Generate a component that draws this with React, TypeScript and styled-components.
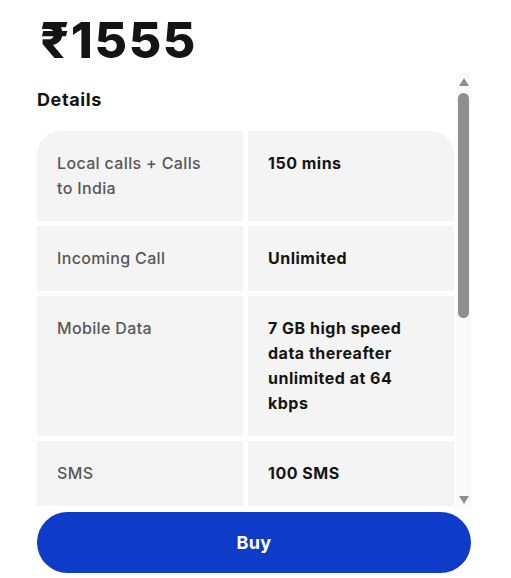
import styled, { createGlobalStyle } from "styled-components"

const GlobalStyle = createGlobalStyle`
  html, body {
    margin: 0;
    padding: 0;
    background: #ffffff;
  }
  body {
    font-family: Inter, "Liberation Sans", "DejaVu Sans", sans-serif;
    color: #141414;
  }
  * {
    box-sizing: border-box;
  }
`

type Detail = {
  label: string
  value: string
}

const details: Detail[] = [
  { label: 'Local calls + Calls to India', value: '150 mins' },
  { label: 'Incoming Call', value: 'Unlimited' },
  { label: 'Mobile Data', value: '7 GB high speed data thereafter unlimited at 64 kbps' },
  { label: 'SMS', value: '100 SMS' },
  { label: 'Validity', value: '30 days' },
  { label: 'Roaming', value: 'Available in UAE' },
  { label: 'Activation', value: 'Instant' },
  { label: 'Renewal', value: 'Auto-renews every 30 days' },
]

export default function App() {
  const last = details.length - 1

  return (
    <Page>
      <GlobalStyle />
      <Price>₹1555</Price>
      <Frame>
        <ScrollArea>
          <Heading>Details</Heading>
          <Table>
            {details.map((row, i) => (
              <Row key={row.label}>
                <Cell $first={i === 0} $last={i === last} $side="left">
                  <Label>{row.label}</Label>
                </Cell>
                <Cell $first={i === 0} $last={i === last} $side="right">
                  <Value>{row.value}</Value>
                </Cell>
              </Row>
            ))}
          </Table>
        </ScrollArea>
        {/* the browser hides native scrollbars, so draw the classic one */}
        <ScrollBar>
          <ArrowButton $dir="up" />
          <Track>
            <Thumb />
          </Track>
          <ArrowButton $dir="down" />
        </ScrollBar>
      </Frame>
      <BuyButton type="button">Buy</BuyButton>
    </Page>
  )
}

const Page = styled.div`
  width: 471px;
  padding-left: 37px;
  display: flex;
  flex-direction: column;
`

const Price = styled.h1`
  margin: 10px 0 0 3px;
  font-size: 50px;
  line-height: 60px;
  font-weight: 800;
  letter-spacing: 1.6px;
  color: #141414;
`

const Frame = styled.div`
  margin-top: 2px;
  height: 437px;
  display: flex;
`

const ScrollArea = styled.div`
  flex: 1;
  min-width: 0;
  overflow-y: auto;
  padding: 16px 2px 55px 0;
  scrollbar-width: none;
`

const grey = '#8f8f8f'
const trackBg = '#fafafa'

const ScrollBar = styled.div`
  width: 15px;
  flex-shrink: 0;
  display: flex;
  flex-direction: column;
  background: ${trackBg};
`

const ArrowButton = styled.div<{ $dir: 'up' | 'down' }>`
  height: 16px;
  flex-shrink: 0;
  display: flex;
  justify-content: center;
  align-items: ${(p) => (p.$dir === 'up' ? 'flex-end' : 'flex-start')};
  padding: ${(p) => (p.$dir === 'up' ? '0 0 2px 0' : '3px 0 0 0')};

  &::before {
    content: '';
    width: 0;
    height: 0;
    border-left: 5.5px solid transparent;
    border-right: 5.5px solid transparent;
    ${(p) =>
      p.$dir === 'up'
        ? `border-bottom: 8px solid ${grey};`
        : `border-top: 8px solid ${grey};`}
  }
`

const Track = styled.div`
  flex: 1;
  padding: 5px 2px 0 2px;
`

const Thumb = styled.div`
  height: 225px;
  border-radius: 6px;
  background: ${grey};
`

const Heading = styled.h2`
  margin: 0 0 19px 0;
  font-size: 18px;
  line-height: 24px;
  font-weight: 700;
  letter-spacing: 0.6px;
  color: #141414;
`

const Table = styled.div`
  display: flex;
  flex-direction: column;
  gap: 5px;
`

const Row = styled.div`
  display: grid;
  grid-template-columns: 1fr 1fr;
  gap: 5px;
`

const Cell = styled.div<{ $first: boolean; $last: boolean; $side: 'left' | 'right' }>`
  background: #f4f4f4;
  padding: 20px 24px 20px 20px;
  border-top-left-radius: ${(p) => (p.$first && p.$side === 'left' ? '24px' : '0')};
  border-top-right-radius: ${(p) => (p.$first && p.$side === 'right' ? '24px' : '0')};
  border-bottom-left-radius: ${(p) => (p.$last && p.$side === 'left' ? '24px' : '0')};
  border-bottom-right-radius: ${(p) => (p.$last && p.$side === 'right' ? '24px' : '0')};
`

const Label = styled.p`
  margin: 0;
  font-size: 16px;
  line-height: 25px;
  font-weight: 500;
  letter-spacing: 0.35px;
  color: #575757;
`

const Value = styled.p`
  margin: 0;
  font-size: 16px;
  line-height: 25px;
  font-weight: 700;
  letter-spacing: 0.5px;
  color: #141414;
`

const BuyButton = styled.button`
  margin-top: 3px;
  height: 61px;
  width: 434px;
  border: none;
  border-radius: 31px;
  background: #0e3bc8;
  color: #ffffff;
  font-family: Inter, "Liberation Sans", sans-serif;
  font-size: 18px;
  font-weight: 700;
  letter-spacing: 0.4px;
  cursor: pointer;
`
